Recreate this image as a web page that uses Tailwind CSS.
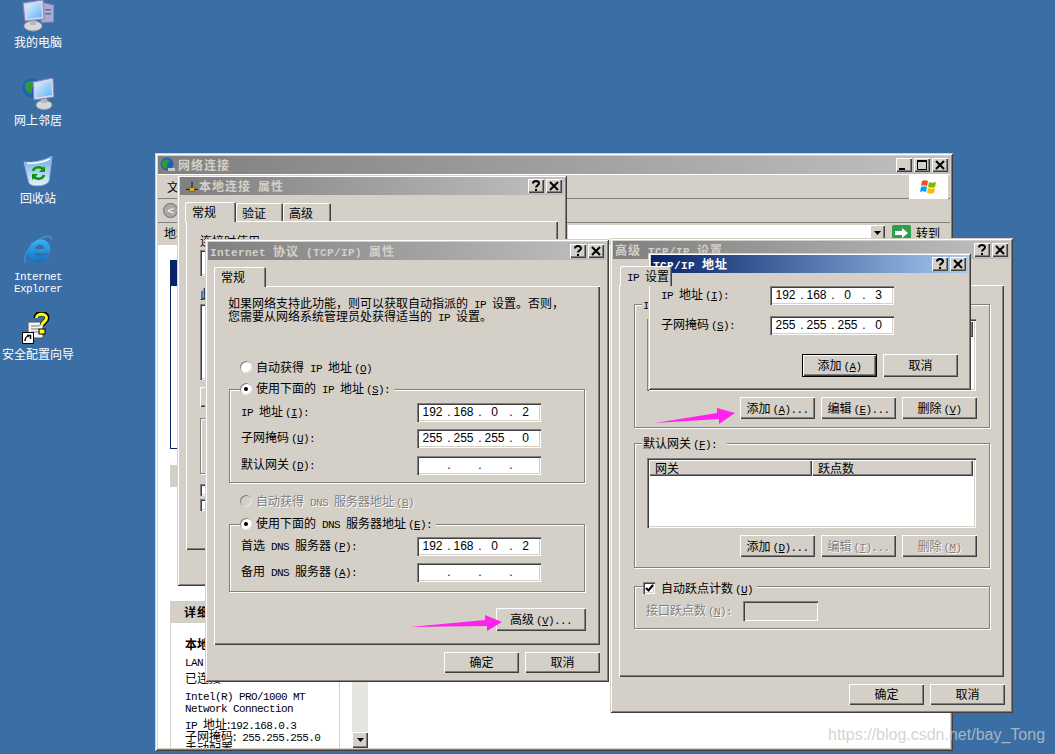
<!DOCTYPE html>
<html lang="zh-CN">
<head>
  <meta charset="UTF-8">
  <title>TCP/IP 地址</title>
  <script src="https://cdn.jsdelivr.net/npm/@tailwindcss/browser@4"></script>
</head>
<body class="bg-[#3a6ea5]">
  <div id="root" class="relative w-[1055px] h-[754px] overflow-hidden bg-[#3a6ea5] text-[12px] leading-[13px] text-black font-['Noto_Sans_CJK_SC','Liberation_Sans',sans-serif]"></div>

  <script>
    const raised = "bg-[#d4d0c8] shadow-[inset_1px_1px_0_#fff,inset_-1px_-1px_0_#404040,inset_-2px_-2px_0_#808080]";
    const sunken = "bg-white shadow-[inset_1px_1px_0_#808080,inset_2px_2px_0_#404040,inset_-1px_-1px_0_#fff,inset_-2px_-2px_0_#d4d0c8]";
    const sunkenOff = "bg-[#d4d0c8] shadow-[inset_1px_1px_0_#808080,inset_2px_2px_0_#404040,inset_-1px_-1px_0_#fff,inset_-2px_-2px_0_#d4d0c8]";
    const win = "absolute bg-[#d4d0c8] p-[3px] shadow-[inset_1px_1px_0_#d4d0c8,inset_-1px_-1px_0_#404040,inset_2px_2px_0_#fff,inset_-2px_-2px_0_#808080]";
    const group = "relative border border-[#808080] shadow-[inset_1px_1px_0_#fff,1px_1px_0_#fff]";
    const off = "text-[#808080] [text-shadow:1px_1px_0_#fff]";

    // half width latin, same advance as the bitmap font in the shot
    const l = t => `<span class="font-['Liberation_Mono',monospace] text-[11px] leading-[0] tracking-[-0.6px] whitespace-pre">${t}</span>`;
    const lb = t => `<span class="font-['Liberation_Mono',monospace] text-[11px] leading-[0] tracking-[0.4px] whitespace-pre">${t}</span>`;
    const m = c => `<span class="font-['Liberation_Mono',monospace] text-[11px] leading-[0] tracking-[-0.6px] whitespace-pre ml-[2px]">(<u>${c}</u>)</span>`;

    const glyphs = {
      help: `<path d="M5 4.500C5 2.500 6.500 2 8 2s3 .8 3 2.500S8 6.500 8 8.500" fill="none" stroke="#000" stroke-width="2"/><rect x="7" y="10" width="2" height="2"/>`,
      close: `<path d="M4 3l8 8M12 3l-8 8" stroke="#000" stroke-width="2" fill="none"/>`,
      min: `<rect x="3" y="10" width="6" height="2"/>`,
      max: `<path d="M3.500 2.500h9v9h-9z" fill="none" stroke="#000"/><rect x="3" y="2" width="10" height="2"/>`
    };
    const tbtn = g => `<div class="${raised} w-[16px] h-[14px]"><svg width="16" height="14" viewBox="0 0 16 14">${glyphs[g]}</svg></div>`;

    function title(text, btns, active, icon = "") {
      const grad = active ? "from-[#0a246a] to-[#a6caf0] text-white" : "from-[#808080] to-[#c0c0c0] text-[#d4d0c8]";
      return `<div class="flex items-center h-[18px] bg-linear-to-r ${grad} font-bold tracking-[1px] pl-[2px] pr-[2px] whitespace-pre">
        ${icon}<span class="flex-1 pb-[2px]">${text}</span>
        <div class="flex gap-[2px]">${btns.map(tbtn).join("")}</div>
      </div>`;
    }

    const btn = (text, cls = "w-[75px]", h = "h-[21px]") =>
      `<div class="${raised} ${h} ${cls} flex items-center justify-center whitespace-pre"><span class="pb-[2px]">${text}</span></div>`;

    function ipField(parts) {
      const segs = parts.map((p, i) =>
        `<span class="w-[27px] text-center">${p}</span>${i < 3 ? '<span class="w-[4px] ml-[1px] mr-[-1px] text-center">.</span>' : ""}`).join("");
      return `<div class="${sunken} w-[124px] h-[19px] flex items-center pl-[2px] font-['Liberation_Sans',sans-serif] text-[12px]">${segs}</div>`;
    }
    const ipRow = (label, parts, w = "w-[176px]", cls = "") =>
      `<div class="flex items-center ${cls}"><div class="${w} pb-[4px] whitespace-pre">${label}</div>${ipField(parts)}</div>`;

    const radio = (on, dis) => `<div class="w-[12px] h-[12px] rounded-full ${dis ? "bg-[#d4d0c8]" : "bg-white"} shadow-[inset_1px_1px_0_#808080,inset_-1px_-1px_0_#e8e6e0] flex items-center justify-center shrink-0">${on ? '<div class="w-[4px] h-[4px] rounded-full bg-black"></div>' : ""}</div>`;
    const tab = (text, on, w) => on
      ? `<div class="${raised} ${w} h-[20px] -mb-px relative z-10 rounded-t-[2px] pl-[7px] pt-[3px] shadow-[inset_1px_1px_0_#fff,inset_-1px_0_0_#404040,inset_-2px_0_0_#808080] whitespace-pre">${text}</div>`
      : `<div class="${w} h-[18px] rounded-t-[2px] pl-[6px] pt-[3px] bg-[#d4d0c8] shadow-[inset_1px_1px_0_#fff,inset_-1px_0_0_#404040,inset_-2px_0_0_#808080] whitespace-pre">${text}</div>`;

    const header = (cols) => `<div class="flex h-[16px]">${cols.map(([t, w]) =>
      `<div class="${w} ${raised} pl-[6px] pt-[1px]">${t}</div>`).join("")}</div>`;

    const icons = {
      pc: `<svg width="32" height="32" viewBox="0 0 32 32">
        <polygon points="19,2 32,5 32,22 19,23" fill="#a9a9d2" stroke="#7373a6"/>
        <rect x="23" y="9" width="6" height="1.500" fill="#6b6b9c"/><rect x="23" y="13" width="6" height="1.500" fill="#6b6b9c"/>
        <ellipse cx="11" cy="26" rx="9" ry="5" fill="#d8d8d8" stroke="#9a9a9a"/><rect x="8" y="20" width="6" height="5" fill="#b5b5c8"/>
        <polygon points="1,3 21,0 22,19 3,21" fill="#d6d6f0" stroke="#8585b8"/>
        <polygon points="4,5 19,3 20,17 5,19" fill="url(#scr)"/>
      </svg>`,
      net: `<svg width="32" height="32" viewBox="0 0 32 32">
        <circle cx="10" cy="10" r="9.500" fill="#1f5fc0"/><path d="M3 6c3-4 8-4 10-1 1 3-2 3-3 5s1 4-1 6C5 15 2 10 3 6z" fill="#2f9a3a"/>
        <ellipse cx="22" cy="27" rx="8" ry="4.500" fill="#d8d8d8" stroke="#9a9a9a"/><rect x="19" y="20" width="6" height="5" fill="#b5b5c8"/>
        <polygon points="11,4 31,0 32,19 12,22" fill="#d6d6f0" stroke="#8585b8"/>
        <polygon points="13.500,6 29,3 30,17 14.500,19.500" fill="url(#scr)"/>
      </svg>`,
      bin: `<svg width="32" height="32" viewBox="0 0 32 32">
        <path d="M2 6C10 7 22 5 30 0L27 25C24 31 9 31 7 27z" fill="url(#bin)" stroke="#8fb7e0"/>
        <path d="M5 7C12 8 22 6 28 3" stroke="#fff" stroke-width="1.500" fill="none"/>
        <path d="M11 15c1-4 7-5 10-2" fill="none" stroke="#0a960a" stroke-width="2.500"/><path d="M23 10v6h-6z" fill="#0a960a"/>
        <path d="M22 19c-1 4-7 5-10 2" fill="none" stroke="#0a960a" stroke-width="2.500"/><path d="M10 24v-6h6z" fill="#0a960a"/>
      </svg>`,
      ie: `<svg width="32" height="32" viewBox="0 0 32 32">
        <path d="M4 29C0 24 8 8 22 3c4-1.500 8-1 8 3" fill="none" stroke="#3f8fd8" stroke-width="1.500"/>
        <path d="M28 19H13c1 6 8 6 11 2h4c-3 9-21 11-22-1C5 9 16 4 22 6c6 2 7 8 6 13zM13 15h9c0-6-8-6-9 0z" fill="url(#ie)" fill-rule="evenodd"/>
      </svg>`,
      wiz: `<svg width="32" height="32" viewBox="0 0 32 32">
        <path d="M6 10h12l3 3v13H6z" fill="#f4f4f4" stroke="#555"/>
        <path d="M9 14h8M9 17h8M9 20h8" stroke="#777"/>
        <path d="M14 6c0-6 11-6 11 0 0 4-5 4-5 8" fill="none" stroke="#000" stroke-width="5"/>
        <path d="M14.500 6c0-5 10-5 10 0 0 4-5 4-5 8" fill="none" stroke="#ffff00" stroke-width="3"/>
        <rect x="17" y="17" width="6" height="5" fill="#ffff00" stroke="#000"/>
        <rect x="0.500" y="20.500" width="11" height="11" fill="#fff" stroke="#000"/>
        <path d="M3 29c0-3 2-5 4-5M5 23.500h3.500V27" stroke="#000" stroke-width="1.500" fill="none"/>
      </svg>`
    };
    const defs = `<svg width="0" height="0" class="absolute"><defs>
      <linearGradient id="scr" x1="0" y1="0" x2="1" y2="1"><stop offset="0" stop-color="#dff2ff"/><stop offset="1" stop-color="#5fb2f2"/></linearGradient>
      <linearGradient id="bin" x1="0" y1="0" x2="0" y2="1"><stop offset="0" stop-color="#6fa8e6"/><stop offset="1" stop-color="#e6f1fb"/></linearGradient>
      <linearGradient id="ie" x1="0" y1="0" x2="0" y2="1"><stop offset="0" stop-color="#37b4f0"/><stop offset="1" stop-color="#1470c8"/></linearGradient>
    </defs></svg>`;

    const desk = (icon, label) =>
      `<div class="h-[78px] flex flex-col items-center">${icon}<div class="mt-[3px] text-white text-center whitespace-pre">${label}</div></div>`;

    const netIcon = `<svg class="mr-[1px] ml-[4px]" width="12" height="14" viewBox="0 0 14 14"><path d="M0 11h14M7 2v9" stroke="#000"/><rect x="4" y="9" width="6" height="4" fill="#e8b820" stroke="#806000"/></svg>`;
    const globeIcon = `<svg class="mr-[2px]" width="16" height="16" viewBox="0 0 16 16"><circle cx="7" cy="7" r="6.500" fill="#1f5fc0"/><path d="M2 5c2-3 6-3 7-1s-2 2-2 4 1 3-1 4C3 11 1 8 2 5z" fill="#2f9a3a"/><path d="M8 11h7v3H8z" fill="#c8c8c8"/></svg>`;

    document.getElementById("root").innerHTML = `
    ${defs}
    <div class="w-[76px] flex flex-col">
      ${desk(icons.pc, "我的电脑")}
      ${desk(icons.net, "网上邻居")}
      ${desk(icons.bin, "回收站")}
      ${desk(icons.ie, `<div class="leading-[12px]">${l("Internet")}<br>${l("Explorer")}</div>`)}
      ${desk(icons.wiz, "安全配置向导")}
    </div>

    <!-- 网络连接 -->
    <div class="${win} left-[155px] top-[153px] w-[798px] h-[598px] flex flex-col">
      ${title("网络连接", ["min", "max", "close"], false, globeIcon)}
      <div class="flex h-[25px] border-t border-white border-b-[#808080] border-b pl-[9px] pt-[5px]"><span class="flex-1">文件</span>
        <div class="w-[39px] h-[24px] -mt-[5px] mr-[2px] bg-white flex items-center justify-center">
          <svg width="20" height="20" viewBox="0 0 20 20"><path d="M3 4c2-1 4-1 6 0L8 9C6 8 4 8 2 9z" fill="#f25022"/><path d="M10 5c2 1 4 1 7 0l-1 5c-2 1-5 1-7 0z" fill="#7fba00"/><path d="M2 10c2-1 4-1 6 0l-1 5c-2-1-4-1-6 0z" fill="#00a4ef"/><path d="M9 11c2 1 4 1 7 0l-1 5c-2 1-5 1-7 0z" fill="#ffb900"/></svg>
        </div>
      </div>
      <div class="h-[24px] border-b border-[#808080] pl-[5px] pt-[4px]">
        <div class="w-[15px] h-[15px] rounded-full bg-[#a8a8a8] shadow-[inset_0_0_0_1px_#808080] text-white text-center leading-[14px]">&lt;</div>
      </div>
      <div class="flex items-start h-[23px] pl-[6px] pt-[2px] shadow-[inset_0_-1px_0_#fff]">
        <span class="w-[404px] pt-[1px]">地址</span>
        <div class="w-[317px] h-[16px] bg-white flex justify-end"><div class="${raised} w-[15px] h-[15px] flex items-center justify-center"><svg width="7" height="4"><path d="M0 0h7L3.500 4z"/></svg></div></div>
        <div class="ml-[7px] w-[19px] h-[16px] bg-[#2e9e4a] rounded-[2px] flex items-center justify-center"><svg width="13" height="10" viewBox="0 0 13 10"><path d="M0 3h7V0l6 5-6 5V7H0z" fill="#fff"/></svg></div>
        <span class="ml-[5px] pt-[1px]">转到</span>
      </div>
      <div class="flex-1 bg-white flex min-h-0 overflow-hidden">
        <div class="ml-[12px] w-[170px] pt-[14px] flex flex-col">
          <div class="h-[189px] border border-[#0a246a] border-r-0">
            <div class="h-[25px] w-[6px] bg-[#0a246a]"></div>
          </div>
          <div class="mt-[16px] h-[22px] bg-[#d4d0c8]"></div>
          <div class="h-[114px]"></div>
          <div class="h-[22px] bg-[#d4d0c8] pl-[14px] pt-[4px] font-bold tracking-[1px]">详细信息</div>
          <div class="flex-1 border-l border-r border-[#d4d0c8] pl-[14px] pt-[14px] overflow-hidden">
            <div class="font-bold h-[17px]">本地连接</div>
            <div class="h-[17px]">${l("LAN")} 或高速</div>
            <div class="h-[17px]">已连接</div>
            <div class="h-[12px]">${l("Intel(R) PRO/1000 MT")}</div>
            <div class="h-[17px]">${l("Network Connection")}</div>
            <div class="h-[12px]">${l("IP ")}地址:${l("192.168.0.3")}</div>
            <div class="h-[12px]">子网掩码:${l(" 255.255.255.0")}</div>
            <div>手动配置</div>
          </div>
        </div>
        <div class="ml-[12px] w-[16px] flex flex-col">
          <div class="flex-1 bg-[#e6e4de]"></div>
          <div class="${raised} h-[16px] flex items-center justify-center"><svg width="7" height="4"><path d="M0 0h7L3.500 4z"/></svg></div>
        </div>
      </div>
    </div>

    <!-- 本地连接 属性 -->
    <div class="${win} left-[177px] top-[175px] w-[390px] h-[411px]">
      <div class="-mt-[1px]">${title(`本地连接${lb(" ")}属性`, ["help", "close"], false, netIcon)}</div>
      <div class="flex items-end ml-[5px] mt-[7px]">
        ${tab("常规", true, "w-[51px]")}${tab("验证", false, "w-[47px]")}${tab("高级", false, "w-[48px]")}
      </div>
      <div class="${raised} ml-[6px] w-[372px] h-[329px] pl-[14px] pt-[13px]">
        <div>连接时使用:</div>
        <div class="${sunken} w-[340px] h-[26px] mt-[3px]"></div>
        <div class="mt-[11px]">此连接使用下列项目:</div>
        <div class="${sunken} w-[340px] h-[76px] mt-[4px]"></div>
        <div class="${raised} w-[340px] h-[20px] mt-[7px]"></div>
        <div class="${group} w-[340px] h-[56px] mt-[11px]"></div>
        <div class="${sunken} w-[12px] h-[12px] mt-[10px]"></div>
        <div class="${sunken} w-[12px] h-[12px] mt-[3px]"></div>
      </div>
    </div>

    <!-- Internet 协议 (TCP/IP) 属性 -->
    <div class="${win} left-[205px] top-[239px] w-[404px] h-[443px]">
      ${title(`${lb("Internet ")}协议${lb(" (TCP/IP) ")}属性`, ["help", "close"], false)}
      <div class="flex items-end ml-[6px] mt-[7px]">${tab("常规", true, "w-[52px]")}</div>
      <div class="${raised} ml-[6px] w-[386px] h-[359px] pl-[14px] pt-[10px] flex flex-col">
        <div class="whitespace-pre">如果网络支持此功能，则可以获取自动指派的${l(" IP ")}设置。否则，<br>您需要从网络系统管理员处获得适当的${l(" IP ")}设置。</div>
        <div class="flex items-center gap-[4px] ml-[12px] mt-[37px] h-[16px] whitespace-pre">${radio(false)}<span class="pb-[2px]">自动获得${l(" IP ")}地址${m("O")}</span></div>
        <div class="${group} w-[356px] h-[94px] ml-[1px] mt-[14px] pl-[11px] pt-[13px]">
          <div class="absolute -top-[9px] left-[10px] bg-[#d4d0c8] pr-[4px] flex items-center gap-[4px] whitespace-pre">${radio(true)}<span class="pb-[2px]">使用下面的${l(" IP ")}地址${m("S")}${l(":")}</span></div>
          ${ipRow(`${l("IP ")}地址${m("I")}${l(":")}`, ["192", "168", "0", "2"])}
          ${ipRow(`子网掩码${m("U")}${l(":")}`, ["255", "255", "255", "0"], "w-[176px]", "mt-[7px]")}
          ${ipRow(`默认网关${m("D")}${l(":")}`, ["", "", "", ""], "w-[176px]", "mt-[8px]")}
        </div>
        <div class="flex items-center gap-[4px] ml-[12px] mt-[10px] h-[16px] whitespace-pre ${off}">${radio(false, true)}<span class="pb-[2px]">自动获得${l(" DNS ")}服务器地址${m("B")}</span></div>
        <div class="${group} w-[356px] h-[68px] ml-[1px] mt-[15px] pl-[11px] pt-[12px]">
          <div class="absolute -top-[9px] left-[10px] bg-[#d4d0c8] pr-[4px] flex items-center gap-[4px] whitespace-pre">${radio(true)}<span class="pb-[2px]">使用下面的${l(" DNS ")}服务器地址${m("E")}${l(":")}</span></div>
          ${ipRow(`首选${l(" DNS ")}服务器${m("P")}${l(":")}`, ["192", "168", "0", "2"])}
          ${ipRow(`备用${l(" DNS ")}服务器${m("A")}${l(":")}`, ["", "", "", ""], "w-[176px]", "mt-[7px]")}
        </div>
        <div class="mt-[16px] ml-[268px]">${btn(`高级${m("V")}${l("...")}`, "w-[90px]", "h-[23px]")}</div>
      </div>
      <div class="flex justify-end gap-[6px] mt-[7px] pr-[6px]">${btn("确定")}${btn("取消")}</div>
    </div>

    <!-- 高级 TCP/IP 设置 -->
    <div class="${win} left-[610px] top-[238px] w-[403px] h-[475px]">
      ${title(`高级${lb(" TCP/IP ")}设置`, ["help", "close"], false)}
      <div class="flex items-end ml-[7px] mt-[7px]">${tab(`${l("IP ")}设置`, true, "w-[52px]")}${tab(l("DNS"), false, "w-[40px]")}</div>
      <div class="${raised} ml-[6px] w-[385px] h-[392px] pl-[15px] pt-[19px] flex flex-col">
        <div class="${group} w-[356px] h-[124px] pl-[12px] pt-[14px]">
          <div class="absolute -top-[8px] left-[7px] bg-[#d4d0c8] px-[1px] whitespace-pre">${l("IP ")}地址${m("R")}${l(":")}</div>
          <div class="${sunken} w-[329px] h-[72px] p-[2px]">${header([[`${l("IP ")}地址`, "w-[163px]"], ["子网掩码", "w-[161px]"]])}</div>
          <div class="flex gap-[6px] ml-[93px] mt-[6px]">${btn(`添加${m("A")}${l("...")}`, "w-[75px]", "h-[22px]")}${btn(`编辑${m("E")}${l("...")}`, "w-[75px]", "h-[22px]")}${btn(`删除${m("V")}`, "w-[75px]", "h-[22px]")}</div>
        </div>
        <div class="${group} w-[356px] h-[125px] mt-[15px] pl-[12px] pt-[14px]">
          <div class="absolute -top-[8px] left-[7px] bg-[#d4d0c8] px-[1px] pr-[10px] whitespace-pre">默认网关${m("F")}${l(":")}</div>
          <div class="${sunken} w-[329px] h-[70px] p-[2px]">${header([["网关", "w-[163px]"], ["跃点数", "w-[161px]"]])}</div>
          <div class="flex gap-[6px] ml-[93px] mt-[7px]">${btn(`添加${m("D")}${l("...")}`, "w-[75px]", "h-[22px]")}${btn(`<span class="${off}">编辑${m("T")}${l("...")}</span>`, "w-[75px]", "h-[22px]")}${btn(`<span class="${off}">删除${m("M")}</span>`, "w-[75px]", "h-[22px]")}</div>
        </div>
        <div class="${group} w-[356px] h-[43px] mt-[18px] pl-[11px] pt-[14px]">
          <div class="absolute -top-[6px] left-[8px] bg-[#d4d0c8] pr-[4px] flex items-center gap-[6px] whitespace-pre">
            <div class="${sunken} w-[12px] h-[12px] flex items-center justify-center"><svg width="9" height="8" viewBox="0 0 9 8"><path d="M1 4l2.500 2.500L8 1" fill="none" stroke="#000" stroke-width="2"/></svg></div>
            <span class="pb-[1px]">自动跃点计数${m("U")}</span>
          </div>
          <div class="flex items-center ${off} whitespace-pre"><div class="w-[97px] pb-[4px]">接口跃点数${m("N")}${l(":")}</div><div class="${sunkenOff} w-[75px] h-[20px]"></div></div>
        </div>
      </div>
      <div class="flex justify-end gap-[6px] mt-[7px] pr-[5px]">${btn("确定")}${btn("取消")}</div>
    </div>

    <!-- TCP/IP 地址 -->
    <div class="${win} left-[648px] top-[253px] w-[323px] h-[137px]">
      <div class="-mt-[1px]">${title(`${lb("TCP/IP ")}地址`, ["help", "close"], true)}</div>
      <div class="pl-[10px] pt-[12px]">
        ${ipRow(`${l("IP ")}地址${m("I")}${l(":")}`, ["192", "168", "0", "3"], "w-[109px]", "h-[20px]")}
        ${ipRow(`子网掩码${m("S")}${l(":")}`, ["255", "255", "255", "0"], "w-[109px]", "h-[20px] mt-[10px]")}
      </div>
      <div class="flex justify-end gap-[6px] mt-[19px] pr-[10px]">
        <div class="border border-black">${btn(`添加${m("A")}`, "w-[73px]")}</div>${btn("取消", "w-[75px]", "h-[23px]")}
      </div>
    </div>

    <svg class="absolute left-[405px] top-[610px]" width="100" height="25" viewBox="405 610 100 25"><polygon points="410,627 485,620 485,615 502,622 487,631 487,626" fill="#ff22ee"/></svg>
    <svg class="absolute left-[650px] top-[405px]" width="90" height="22" viewBox="650 405 90 22"><polygon points="655,423 717,413 717,408 735,413 719,424 719,419" fill="#ff22ee"/></svg>

    <div class="absolute left-[828px] top-[725px] font-['Liberation_Sans',sans-serif] text-[16px] leading-[20px] text-[#c8c8c8]/80 whitespace-pre">https://blog.csdn.net/bay_Tong</div>
    `;
  </script>
</body>
</html>
